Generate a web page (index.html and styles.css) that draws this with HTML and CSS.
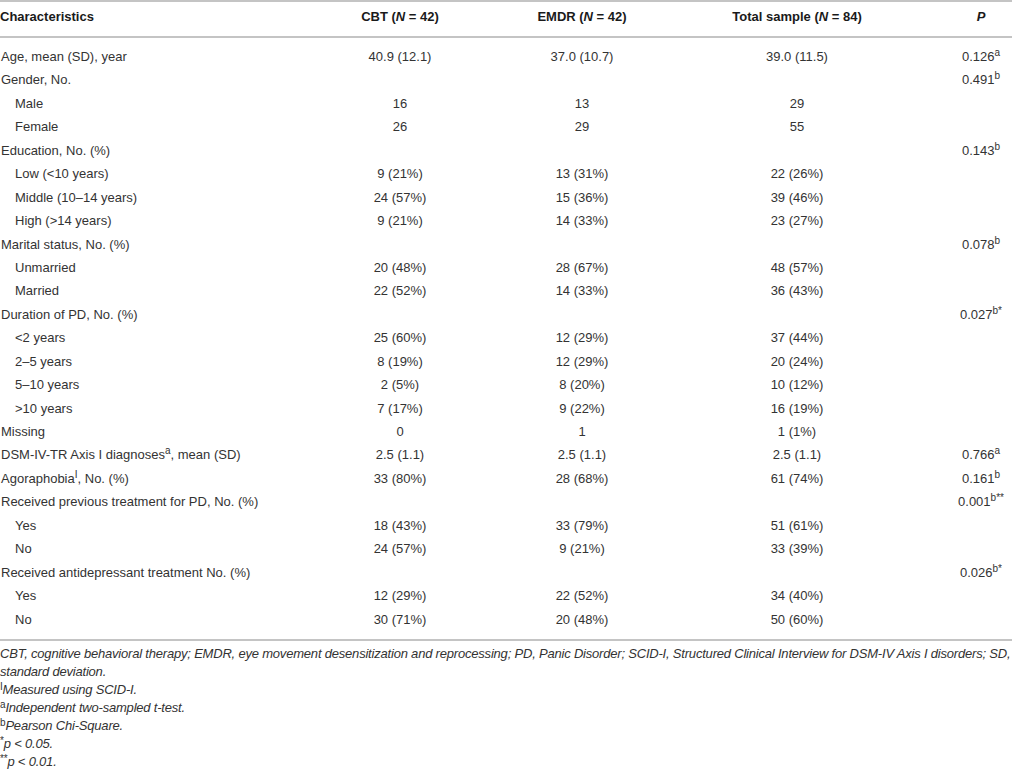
FILE: index.html
```html
<!DOCTYPE html>
<html lang="en">
<head>
<meta charset="utf-8">
<title>Table 1</title>
<link rel="stylesheet" href="styles.css">
</head>
<body>
<div class="wrap">
<table class="tbl">
  <colgroup>
    <col class="c1"><col class="c2"><col class="c3"><col class="c4"><col class="c5">
  </colgroup>
  <thead>
    <tr>
      <th class="lab">Characteristics</th>
      <th>CBT (<i>N</i> = 42)</th>
      <th>EMDR (<i>N</i> = 42)</th>
      <th>Total sample (<i>N</i> = 84)</th>
      <th class="p"><i>P</i></th>
    </tr>
  </thead>
  <tbody>
    <tr class="first"><td class="lab">Age, mean (SD), year</td><td>40.9 (12.1)</td><td>37.0 (10.7)</td><td>39.0 (11.5)</td><td class="p">0.126<sup>a</sup></td></tr>
    <tr><td class="lab">Gender, No.</td><td></td><td></td><td></td><td class="p">0.491<sup>b</sup></td></tr>
    <tr><td class="lab sub">Male</td><td>16</td><td>13</td><td>29</td><td class="p"></td></tr>
    <tr><td class="lab sub">Female</td><td>26</td><td>29</td><td>55</td><td class="p"></td></tr>
    <tr><td class="lab">Education, No. (%)</td><td></td><td></td><td></td><td class="p">0.143<sup>b</sup></td></tr>
    <tr><td class="lab sub">Low (&lt;10 years)</td><td>9 (21%)</td><td>13 (31%)</td><td>22 (26%)</td><td class="p"></td></tr>
    <tr><td class="lab sub">Middle (10–14 years)</td><td>24 (57%)</td><td>15 (36%)</td><td>39 (46%)</td><td class="p"></td></tr>
    <tr><td class="lab sub">High (&gt;14 years)</td><td>9 (21%)</td><td>14 (33%)</td><td>23 (27%)</td><td class="p"></td></tr>
    <tr><td class="lab">Marital status, No. (%)</td><td></td><td></td><td></td><td class="p">0.078<sup>b</sup></td></tr>
    <tr><td class="lab sub">Unmarried</td><td>20 (48%)</td><td>28 (67%)</td><td>48 (57%)</td><td class="p"></td></tr>
    <tr><td class="lab sub">Married</td><td>22 (52%)</td><td>14 (33%)</td><td>36 (43%)</td><td class="p"></td></tr>
    <tr><td class="lab">Duration of PD, No. (%)</td><td></td><td></td><td></td><td class="p">0.027<sup>b*</sup></td></tr>
    <tr><td class="lab sub">&lt;2 years</td><td>25 (60%)</td><td>12 (29%)</td><td>37 (44%)</td><td class="p"></td></tr>
    <tr><td class="lab sub">2–5 years</td><td>8 (19%)</td><td>12 (29%)</td><td>20 (24%)</td><td class="p"></td></tr>
    <tr><td class="lab sub">5–10 years</td><td>2 (5%)</td><td>8 (20%)</td><td>10 (12%)</td><td class="p"></td></tr>
    <tr><td class="lab sub">&gt;10 years</td><td>7 (17%)</td><td>9 (22%)</td><td>16 (19%)</td><td class="p"></td></tr>
    <tr><td class="lab">Missing</td><td>0</td><td>1</td><td>1 (1%)</td><td class="p"></td></tr>
    <tr><td class="lab">DSM-IV-TR Axis I diagnoses<sup>a</sup>, mean (SD)</td><td>2.5 (1.1)</td><td>2.5 (1.1)</td><td>2.5 (1.1)</td><td class="p">0.766<sup>a</sup></td></tr>
    <tr><td class="lab">Agoraphobia<sup>I</sup>, No. (%)</td><td>33 (80%)</td><td>28 (68%)</td><td>61 (74%)</td><td class="p">0.161<sup>b</sup></td></tr>
    <tr><td class="lab">Received previous treatment for PD, No. (%)</td><td></td><td></td><td></td><td class="p">0.001<sup>b**</sup></td></tr>
    <tr><td class="lab sub">Yes</td><td>18 (43%)</td><td>33 (79%)</td><td>51 (61%)</td><td class="p"></td></tr>
    <tr><td class="lab sub">No</td><td>24 (57%)</td><td>9 (21%)</td><td>33 (39%)</td><td class="p"></td></tr>
    <tr><td class="lab">Received antidepressant treatment No. (%)</td><td></td><td></td><td></td><td class="p">0.026<sup>b*</sup></td></tr>
    <tr><td class="lab sub">Yes</td><td>12 (29%)</td><td>22 (52%)</td><td>34 (40%)</td><td class="p"></td></tr>
    <tr class="last"><td class="lab sub">No</td><td>30 (71%)</td><td>20 (48%)</td><td>50 (60%)</td><td class="p"></td></tr>
  </tbody>
</table>
<div class="notes">
  <p>CBT, cognitive behavioral therapy; EMDR, eye movement desensitization and reprocessing; PD, Panic Disorder; SCID-I, Structured Clinical Interview for DSM-IV Axis I disorders; SD, standard deviation.</p>
  <p><sup>I</sup>Measured using SCID-I.</p>
  <p><sup>a</sup>Independent two-sampled t-test.</p>
  <p><sup>b</sup>Pearson Chi-Square.</p>
  <p><sup>*</sup>p &lt; 0.05.</p>
  <p><sup>**</sup>p &lt; 0.01.</p>
</div>
</div>
</body>
</html>
```

FILE: styles.css
```css
html, body {
  margin: 0;
  padding: 0;
  background: #fff;
}
body {
  font-family: "Liberation Sans", Arial, Helvetica, sans-serif;
  font-size: 13px;
  color: #333;
}
.wrap {
  width: 1012px;
}
.tbl {
  width: 1012px;
  border-collapse: collapse;
  table-layout: fixed;
  border-top: 2px solid #c4c4c4;
  border-bottom: 2px solid #c4c4c4;
}
.c1 { width: 310px; }
.c2 { width: 180px; }
.c3 { width: 184px; }
.c4 { width: 246px; }
.c5 { width: 92px; }

.tbl th {
  font-weight: bold;
  color: #1a1a1a;
  text-align: center;
  line-height: 16px;
  padding: 7px 0 11px 0;
  border-bottom: 2px solid #c4c4c4;
  white-space: nowrap;
}
.tbl td {
  text-align: center;
  line-height: 16px;
  padding: 3.73px 0;
  white-space: nowrap;
}
.tbl .lab {
  text-align: left;
  padding-left: 1px;
}
.tbl th.lab {
  padding-left: 0;
}
.tbl td.sub {
  padding-left: 15px;
}
.tbl .p {
  padding-left: 30px;
}
.tbl tr.first td {
  padding-top: 11px;
}
.tbl tr.last td {
  padding-bottom: 11.5px;
}
sup {
  font-size: 10px;
  line-height: 0;
  vertical-align: 5px;
}
.notes {
  padding-top: 4px;
  font-style: italic;
  color: #333;
  letter-spacing: -0.2px;
}
.notes p {
  margin: 0;
  line-height: 18px;
}
.notes sup {
  font-style: normal;
  vertical-align: 4px;
}
```
